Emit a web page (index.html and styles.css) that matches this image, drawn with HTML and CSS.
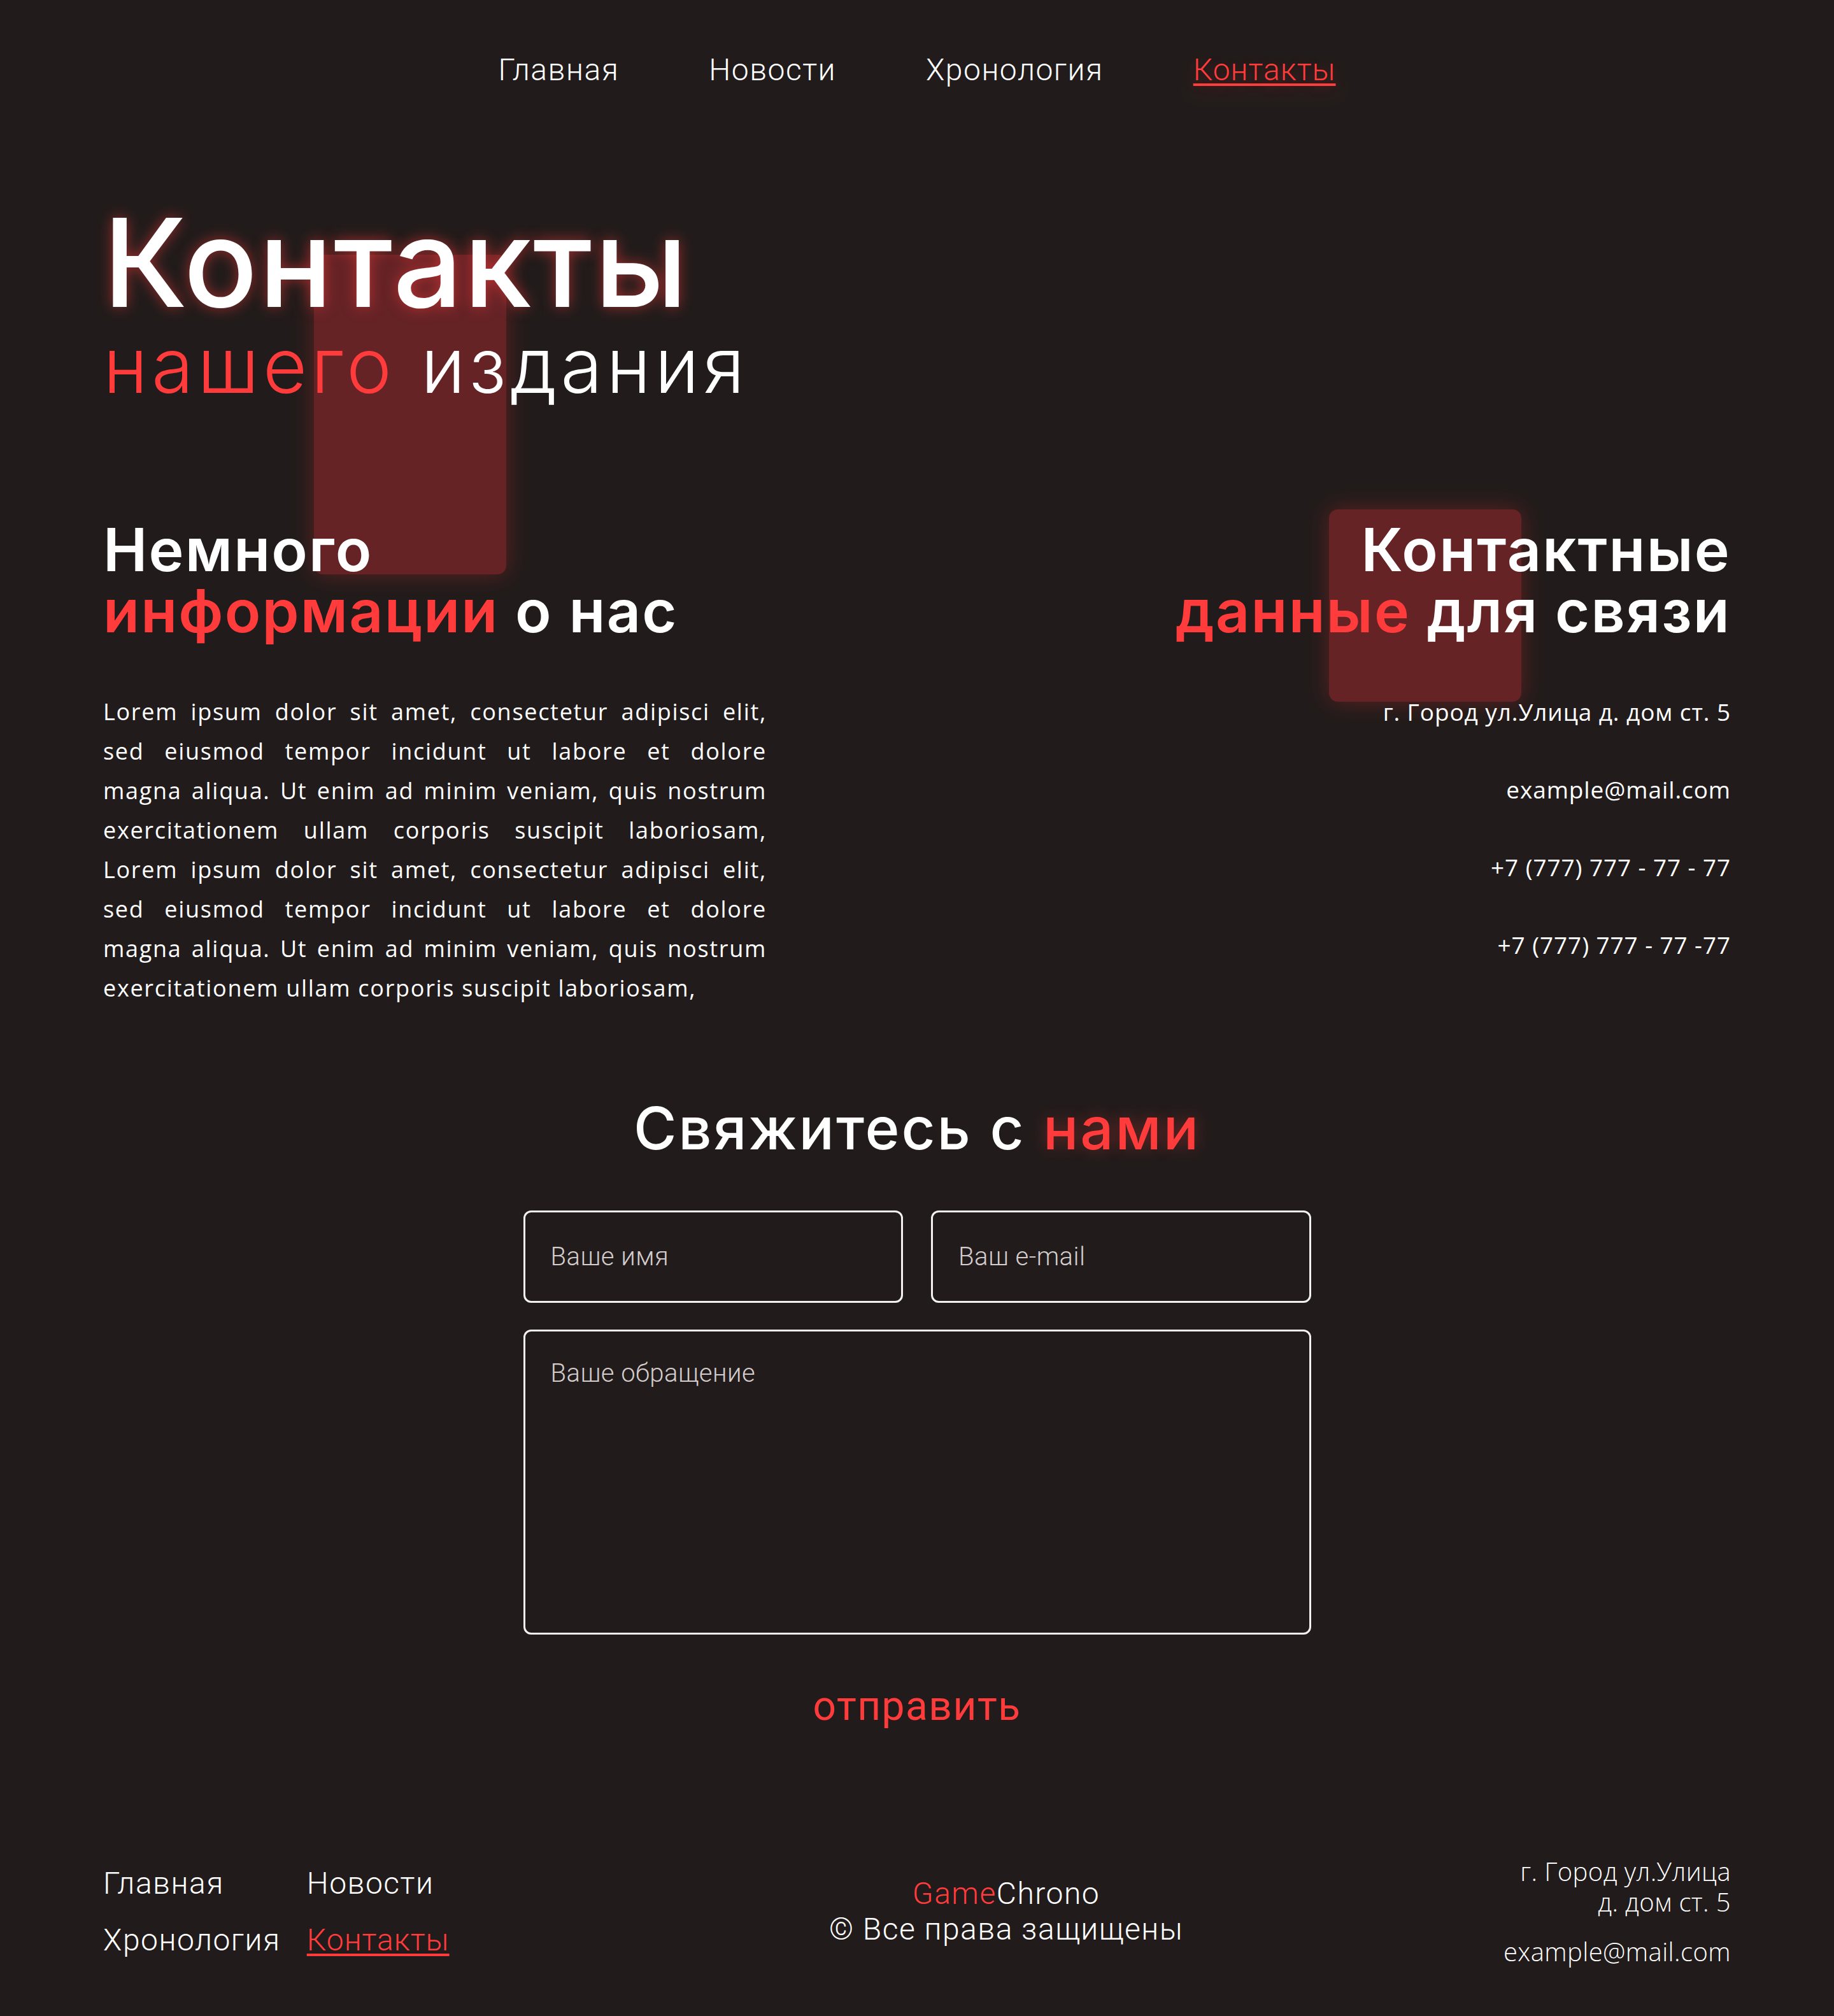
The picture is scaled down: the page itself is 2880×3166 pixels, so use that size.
FILE: index.html
```html
<!DOCTYPE html>
<html lang="ru">
<head>
<meta charset="utf-8">
<title>Контакты — GameChrono</title>
<link rel="stylesheet" href="styles.css">
</head>
<body>
<div class="page">
  <div class="glow-box glow-box--left"></div>
  <div class="glow-box glow-box--right"></div>

  <header class="topnav">
    <a class="topnav__link" href="#">Главная</a>
    <a class="topnav__link" href="#">Новости</a>
    <a class="topnav__link" href="#">Хронология</a>
    <a class="topnav__link topnav__link--active" href="#">Контакты</a>
  </header>

  <section class="hero">
    <h1 class="hero__title">Контакты</h1>
    <p class="hero__sub"><span class="accent">нашего</span> издания</p>
  </section>

  <section class="info">
    <div class="about">
      <h2 class="section-title">Немного<br><span class="accent">информации</span> о нас</h2>
      <p class="about__text">
        <span class="about__line">Lorem ipsum dolor sit amet, consectetur adipisci elit,</span>
        <span class="about__line">sed eiusmod tempor incidunt ut labore et dolore</span>
        <span class="about__line">magna aliqua. Ut enim ad minim veniam, quis nostrum</span>
        <span class="about__line">exercitationem ullam corporis suscipit laboriosam,</span>
        <span class="about__line">Lorem ipsum dolor sit amet, consectetur adipisci elit,</span>
        <span class="about__line">sed eiusmod tempor incidunt ut labore et dolore</span>
        <span class="about__line">magna aliqua. Ut enim ad minim veniam, quis nostrum</span>
        <span class="about__line about__line--last">exercitationem ullam corporis suscipit laboriosam,</span>
      </p>
    </div>
    <div class="contacts">
      <h2 class="section-title section-title--right">Контактные<br><span class="accent">данные</span> для связи</h2>
      <ul class="contacts__list">
        <li>г. Город ул.Улица д. дом ст. 5</li>
        <li>example@mail.com</li>
        <li>+7 (777) 777 - 77 - 77</li>
        <li>+7 (777) 777 - 77 -77</li>
      </ul>
    </div>
  </section>

  <section class="feedback">
    <h2 class="feedback__title">Свяжитесь с <span class="accent accent--glow">нами</span></h2>
    <form class="feedback__form">
      <div class="feedback__row">
        <input class="field" type="text" placeholder="Ваше имя">
        <input class="field" type="text" placeholder="Ваш e-mail">
      </div>
      <textarea class="field field--area" placeholder="Ваше обращение"></textarea>
      <button class="feedback__send" type="button">отправить</button>
    </form>
  </section>

  <footer class="footer">
    <nav class="footer__nav">
      <a class="footer__link" href="#">Главная</a>
      <a class="footer__link" href="#">Новости</a>
      <a class="footer__link" href="#">Хронология</a>
      <a class="footer__link footer__link--active" href="#">Контакты</a>
    </nav>
    <div class="footer__brand">
      <div><span class="accent">Game</span>Chrono</div>
      <div>© Все права защищены</div>
    </div>
    <div class="footer__contacts">
      <p class="footer__addr">г. Город ул.Улица<br>д. дом ст. 5</p>
      <p class="footer__mail">example@mail.com</p>
    </div>
  </footer>
</div>
</body>
</html>
```

FILE: styles.css
```css
* { box-sizing: border-box; }

html, body {
  margin: 0;
  padding: 0;
  background: #211c1b;
}

body {
  color: #ffffff;
  font-family: "Open Sans", "Lato", sans-serif;
}

.page {
  position: relative;
  width: 2880px;
  min-height: 3166px;
  padding: 0 162px;
  overflow: hidden;
}

.accent { color: #ff3b3b; }

/* decorative glowing boxes */
.glow-box {
  position: absolute;
  background: #652326;
  border-radius: 14px;
  box-shadow: 0 0 36px rgba(255, 50, 50, 0.28);
  z-index: 0;
}
.glow-box--left { left: 493px; top: 400px; width: 302px; height: 502px; }
.glow-box--right { left: 2087px; top: 800px; width: 302px; height: 302px; }

/* top navigation */
.topnav {
  position: relative;
  z-index: 1;
  display: flex;
  justify-content: center;
  gap: 141px;
  padding-top: 86px;
}
.topnav__link {
  font-family: "Roboto", sans-serif;
  font-weight: 300;
  font-size: 48px;
  line-height: 1;
  letter-spacing: 1.5px;
  color: #ffffff;
  text-decoration: none;
}
.topnav__link--active {
  color: #ff3b3b;
  letter-spacing: 1px;
  text-decoration: underline;
  text-decoration-thickness: 4px;
  text-underline-offset: 5px;
  text-shadow: 0 6px 24px rgba(255, 59, 59, 0.25);
}

/* hero */
.hero {
  position: relative;
  z-index: 1;
  margin-top: 182px;
}
.hero__title {
  margin: 0;
  font-family: "Inter", sans-serif;
  font-weight: 500;
  font-size: 192px;
  line-height: 1;
  letter-spacing: 2px;
  color: #ffffff;
  text-shadow: 0 0 22px rgba(255, 60, 60, 0.55);
}
.hero__sub {
  margin: 6px 0 0;
  font-family: "Inter", sans-serif;
  font-weight: 300;
  font-size: 120px;
  line-height: 1;
  letter-spacing: 6px;
}

/* info section */
.info {
  position: relative;
  z-index: 1;
  display: flex;
  justify-content: space-between;
  margin-top: 181px;
}
.section-title {
  margin: 0;
  font-family: "Inter", sans-serif;
  font-weight: 600;
  font-size: 93px;
  line-height: 96px;
  letter-spacing: 2.2px;
}
.section-title--right { text-align: right; }

.about { width: 1042px; }
.about__text {
  margin: 80px 0 0;
  font-size: 36px;
  line-height: 62px;
  letter-spacing: 1.7px;
}
.about__line {
  display: block;
  white-space: nowrap;
  text-align: justify;
  text-align-last: justify;
}
.about__line--last {
  text-align: left;
  text-align-last: left;
}

.contacts {
  display: flex;
  flex-direction: column;
  align-items: flex-end;
}
.contacts__list {
  list-style: none;
  margin: 80px 0 0;
  padding: 0;
  text-align: right;
  font-size: 37px;
  line-height: 62px;
  letter-spacing: 0.9px;
}
.contacts__list li + li { margin-top: 60px; }

/* feedback */
.feedback {
  position: relative;
  z-index: 1;
  margin-top: 141px;
  display: flex;
  flex-direction: column;
  align-items: center;
}
.feedback__title {
  margin: 0;
  font-family: "Inter", sans-serif;
  font-weight: 500;
  font-size: 92px;
  line-height: 96px;
  letter-spacing: 3px;
}
.accent--glow { text-shadow: 0 0 24px rgba(255, 59, 59, 0.35); }

.feedback__form {
  margin-top: 81px;
  width: 1237px;
  display: flex;
  flex-direction: column;
  align-items: center;
}
.feedback__row {
  display: flex;
  gap: 44px;
  width: 100%;
}
.field {
  flex: 1 1 0;
  min-width: 0;
  height: 145px;
  background: transparent;
  border: 3px solid #f4f1f1;
  border-radius: 12px;
  padding: 0 40px;
  font-family: "Roboto", sans-serif;
  font-weight: 300;
  font-size: 40px;
  letter-spacing: 0.5px;
  color: #ffffff;
  outline: none;
}
.field::placeholder { color: #d5cdcd; }
.field--area {
  flex: none;
  margin-top: 42px;
  width: 100%;
  height: 479px;
  padding: 42px 40px;
  resize: none;
  line-height: 1.2;
}
.feedback__send {
  margin-top: 81px;
  background: transparent;
  border: none;
  padding: 0 10px;
  font-family: "Roboto", sans-serif;
  font-weight: 400;
  font-size: 64px;
  line-height: 1;
  letter-spacing: 1.5px;
  color: #ff3b3b;
}

/* footer */
.footer {
  position: relative;
  z-index: 1;
  margin-top: 203px;
  display: flex;
  justify-content: space-between;
  align-items: center;
}
.footer__nav {
  width: 637px;
  display: grid;
  grid-template-columns: max-content max-content;
  column-gap: 41px;
  row-gap: 41px;
}
.footer__link {
  font-family: "Roboto", sans-serif;
  font-weight: 300;
  font-size: 48px;
  line-height: 1;
  letter-spacing: 1.5px;
  color: #ffffff;
  text-decoration: none;
}
.footer__link--active {
  color: #ff3b3b;
  letter-spacing: 1px;
  text-decoration: underline;
  text-decoration-thickness: 4px;
  text-underline-offset: 5px;
}
.footer__brand {
  text-align: center;
  font-family: "Roboto", sans-serif;
  font-weight: 300;
  font-size: 48px;
  line-height: 56px;
  letter-spacing: 1.5px;
}
.footer__contacts {
  text-align: right;
  font-weight: 300;
  font-size: 40px;
  letter-spacing: 0.4px;
}
.footer__addr {
  margin: 0;
  line-height: 48px;
}
.footer__mail {
  margin: 30px 0 0;
  line-height: 48px;
}
```
